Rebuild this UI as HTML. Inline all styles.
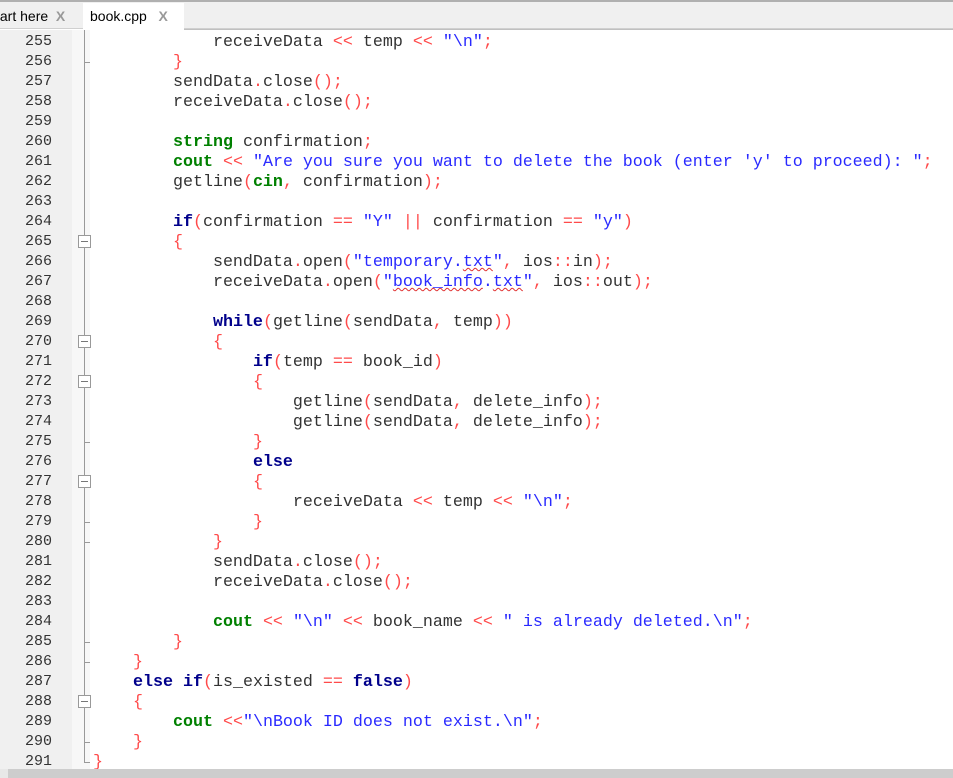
<!DOCTYPE html>
<html><head><meta charset="utf-8"><style>
body{margin:0;width:953px;height:778px;overflow:hidden;background:#fff;position:relative;font-family:"Liberation Sans",sans-serif}
#top{position:absolute;left:0;top:0;width:953px;height:2px;background:#b0b0b0}
#tabs{position:absolute;left:0;top:2px;width:953px;height:26px;background:#f0f0f0;border-bottom:1px solid #d0d0d0}
#tabline{position:absolute;left:0;top:29px;width:953px;height:1px;background:#c0c0c0}
.tab{position:absolute;top:4px;height:25px;font-size:14px;line-height:25px;color:#000}
.x{color:#999;font-weight:bold;font-size:14px}
#gut{position:absolute;left:0;top:30px;width:72px;height:740px;background:#f0f0f0}
#fold{position:absolute;left:72px;top:30px;width:18px;height:740px;background:#f7f7f7}
.ln{position:absolute;left:0;width:52px;text-align:right;font-family:"Liberation Mono",monospace;font-size:15px;color:#333;line-height:20px}
pre{margin:0;position:absolute;left:93px;top:33px;font-family:"Liberation Mono",monospace;font-size:16.67px;line-height:20px;color:#333}
.k{color:#00008b;font-weight:bold}.t{color:#008000;font-weight:bold}.o{color:#ff4a4a}.s{color:#2a2aff}
.w{text-decoration:underline wavy #e03030;text-decoration-thickness:1px}
#vl{position:absolute;left:84px;top:30px;width:1px;height:733px;background:#999}
.tick{position:absolute;left:84px;width:6px;height:1px;background:#999}
.box{position:absolute;left:78px;width:11px;height:11px;border:1px solid #999;background:#fff}
.box:after{content:"";position:absolute;left:2px;top:5px;width:7px;height:1px;background:#777}
#sb{position:absolute;left:0;top:769px;width:953px;height:9px;background:#cdcdcd}
#sbl{position:absolute;left:0;top:769px;width:8px;height:9px;background:#e8e8e8}
</style></head><body>
<div id="top"></div>
<div id="tabs"></div>
<div class="tab" style="left:-4px;width:84px">tart here&nbsp; <span class="x">X</span></div>
<div class="tab" style="left:83px;width:101px;background:#fff;padding-left:7px;box-sizing:border-box;top:3px;height:27px;line-height:27px">book.cpp &nbsp; <span class="x">X</span></div>
<div id="tabline" style="left:184px;width:769px"></div>
<div id="gut"></div><div id="fold"></div>
<div id="vl"></div>
<div id="nums"></div>
<pre>            receiveData <span class="o">&lt;&lt;</span> temp <span class="o">&lt;&lt;</span> <span class="s">"\n"</span><span class="o">;</span>
        <span class="o">}</span>
        sendData<span class="o">.</span>close<span class="o">();</span>
        receiveData<span class="o">.</span>close<span class="o">();</span>

        <span class="t">string</span> confirmation<span class="o">;</span>
        <span class="t">cout</span> <span class="o">&lt;&lt;</span> <span class="s">"Are you sure you want to delete the book (enter 'y' to proceed): "</span><span class="o">;</span>
        getline<span class="o">(</span><span class="t">cin</span><span class="o">,</span> confirmation<span class="o">);</span>

        <span class="k">if</span><span class="o">(</span>confirmation <span class="o">==</span> <span class="s">"Y"</span> <span class="o">||</span> confirmation <span class="o">==</span> <span class="s">"y"</span><span class="o">)</span>
        <span class="o">{</span>
            sendData<span class="o">.</span>open<span class="o">(</span><span class="s">"temporary.<span class="w">txt</span>"</span><span class="o">,</span> ios<span class="o">::</span>in<span class="o">);</span>
            receiveData<span class="o">.</span>open<span class="o">(</span><span class="s">"<span class="w">book_info</span>.<span class="w">txt</span>"</span><span class="o">,</span> ios<span class="o">::</span>out<span class="o">);</span>

            <span class="k">while</span><span class="o">(</span>getline<span class="o">(</span>sendData<span class="o">,</span> temp<span class="o">))</span>
            <span class="o">{</span>
                <span class="k">if</span><span class="o">(</span>temp <span class="o">==</span> book_id<span class="o">)</span>
                <span class="o">{</span>
                    getline<span class="o">(</span>sendData<span class="o">,</span> delete_info<span class="o">);</span>
                    getline<span class="o">(</span>sendData<span class="o">,</span> delete_info<span class="o">);</span>
                <span class="o">}</span>
                <span class="k">else</span>
                <span class="o">{</span>
                    receiveData <span class="o">&lt;&lt;</span> temp <span class="o">&lt;&lt;</span> <span class="s">"\n"</span><span class="o">;</span>
                <span class="o">}</span>
            <span class="o">}</span>
            sendData<span class="o">.</span>close<span class="o">();</span>
            receiveData<span class="o">.</span>close<span class="o">();</span>

            <span class="t">cout</span> <span class="o">&lt;&lt;</span> <span class="s">"\n"</span> <span class="o">&lt;&lt;</span> book_name <span class="o">&lt;&lt;</span> <span class="s">" is already deleted.\n"</span><span class="o">;</span>
        <span class="o">}</span>
    <span class="o">}</span>
    <span class="k">else</span> <span class="k">if</span><span class="o">(</span>is_existed <span class="o">==</span> <span class="k">false</span><span class="o">)</span>
    <span class="o">{</span>
        <span class="t">cout</span> <span class="o">&lt;&lt;</span><span class="s">"\nBook ID does not exist.\n"</span><span class="o">;</span>
    <span class="o">}</span>
<span class="o">}</span></pre>
<div id="sb"></div><div id="sbl"></div>
<script>
var h='';
for(var n=255;n<=291;n++){h+='<div class="ln" style="top:'+(32+20*(n-255))+'px">'+n+'</div>';}
[256,275,279,280,285,286,290,291].forEach(function(n){h+='<div class="tick" style="top:'+(42+20*(n-255))+'px"></div>';});
[265,270,272,277,288].forEach(function(n){h+='<div class="box" style="top:'+(35+20*(n-255))+'px"></div>';});
document.getElementById('nums').outerHTML=h;
</script>
</body></html>
